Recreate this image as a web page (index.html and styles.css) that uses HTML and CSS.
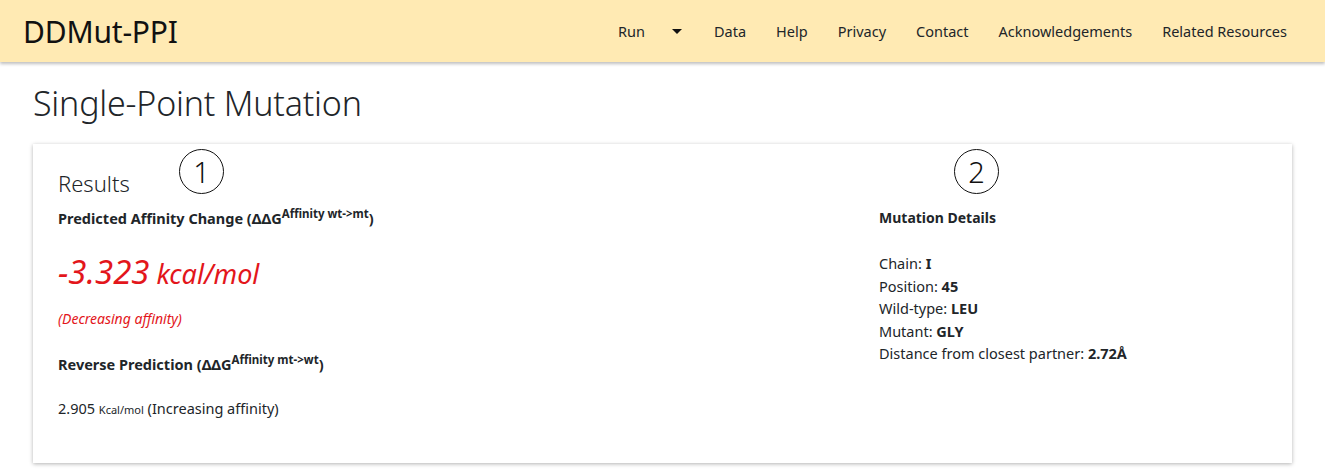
FILE: index.html
```html
<html>
    <head>
        <title>DDMut-PPI - Single-Point Mutation</title>
        <link rel="stylesheet" href="styles.css">
    </head>
    <body>
        <nav class="navbar">
            <a class="brand" href="#">DDMut-PPI</a>
            <ul class="nav_links">
                <li><a href="#">Run</a><span class="caret"></span></li>
                <li><a href="#">Data</a></li>
                <li><a href="#">Help</a></li>
                <li><a href="#">Privacy</a></li>
                <li><a href="#">Contact</a></li>
                <li><a href="#">Acknowledgements</a></li>
                <li><a href="#">Related Resources</a></li>
            </ul>
        </nav>

        <div class="page">
            <h1 class="page_title">Single-Point Mutation</h1>

            <div class="card">
                <span class="marker marker_one">1</span>
                <span class="marker marker_two">2</span>

                <div class="results_row">
                    <div class="col_left">
                        <h2 class="results_title">Results</h2>
                        <p class="label">Predicted Affinity Change (&Delta;&Delta;G<sup>Affinity wt-&gt;mt</sup>)</p>
                        <p class="prediction"><span class="value">-3.323</span> kcal/mol</p>
                        <p class="effect">(Decreasing affinity)</p>
                        <p class="label reverse_label">Reverse Prediction (&Delta;&Delta;G<sup>Affinity mt-&gt;wt</sup>)</p>
                        <p class="reverse">2.905 <small>Kcal/mol</small> (Increasing affinity)</p>
                    </div>
                    <div class="col_right">
                        <p class="label details_label">Mutation Details</p>
                        <ul class="details">
                            <li>Chain: <b>I</b></li>
                            <li>Position: <b>45</b></li>
                            <li>Wild-type: <b>LEU</b></li>
                            <li>Mutant: <b>GLY</b></li>
                            <li>Distance from closest partner: <b>2.72Å</b></li>
                        </ul>
                    </div>
                </div>
            </div>
        </div>
    </body>
</html>
```

FILE: styles.css
```css
body{
    margin: 0;
    font-family: "Noto Sans", "Open Sans", sans-serif;
    color: #212529;
    background: #ffffff;
}
a{
    color: inherit;
    text-decoration: none;
}

/* top bar */
.navbar{
    height: 62px;
    background: #ffeab3;
    box-shadow: 0 2px 3px rgba(0, 0, 0, 0.25);
    display: flex;
    align-items: center;
    justify-content: space-between;
    padding: 0 23px;
}
.brand{
    font-size: 30px;
    color: #111;
    letter-spacing: -0.2px;
}
.nav_links{
    list-style: none;
    display: flex;
    align-items: center;
    margin: 0;
    padding: 0 15px 0 0;
    gap: 30px;
}
.nav_links li{
    font-size: 14.5px;
    display: flex;
    align-items: center;
}
.caret{
    display: inline-block;
    margin-left: 27px;
    border-left: 5px solid transparent;
    border-right: 5px solid transparent;
    border-top: 5px solid #111;
    margin-right: 2px;
}

/* page */
.page{
    padding: 0 33px 0 33px;
}
.page_title{
    font-size: 34px;
    font-weight: 300;
    margin: 18px 0 18px 0;
    letter-spacing: -0.2px;
}
.card{
    position: relative;
    background: #fff;
    box-shadow: 0 1px 4px rgba(0, 0, 0, 0.3);
    padding: 24px 25px 45px 25px;
}
.marker{
    position: absolute;
    top: 5px;
    width: 45px;
    height: 45px;
    border: 1.5px solid #111;
    border-radius: 50%;
    box-sizing: border-box;
    font-size: 29px;
    font-weight: 300;
    display: flex;
    align-items: center;
    justify-content: center;
    color: #111;
}
.marker_one{ left: 146px; }
.marker_two{ left: 921px; }

.results_row{
    display: grid;
    grid-template-columns: 821px 1fr;
}
.results_title{
    font-size: 22px;
    font-weight: 300;
    margin: 0 0 8px 0;
}
.label{
    font-size: 14.5px;
    font-weight: bold;
    margin: 0;
}
.label sup{
    font-size: 11.5px;
}
.prediction{
    color: #e3161b;
    font-style: italic;
    font-size: 27px;
    margin: 21px 0 0 0;
}
.prediction .value{
    font-size: 33px;
}
.effect{
    color: #e3161b;
    font-style: italic;
    font-size: 14px;
    margin: 15px 0 0 0;
}
.reverse_label{
    margin-top: 24px;
}
.reverse{
    font-size: 14.5px;
    margin: 24px 0 0 0;
}
.reverse small{
    font-size: 11px;
}

.col_right{
    padding-top: 40px;
}
.details_label{
    font-size: 14px;
}
.details{
    list-style: none;
    padding: 0;
    margin: 25px 0 0 0;
    font-size: 14.5px;
    line-height: 22.5px;
}
```
